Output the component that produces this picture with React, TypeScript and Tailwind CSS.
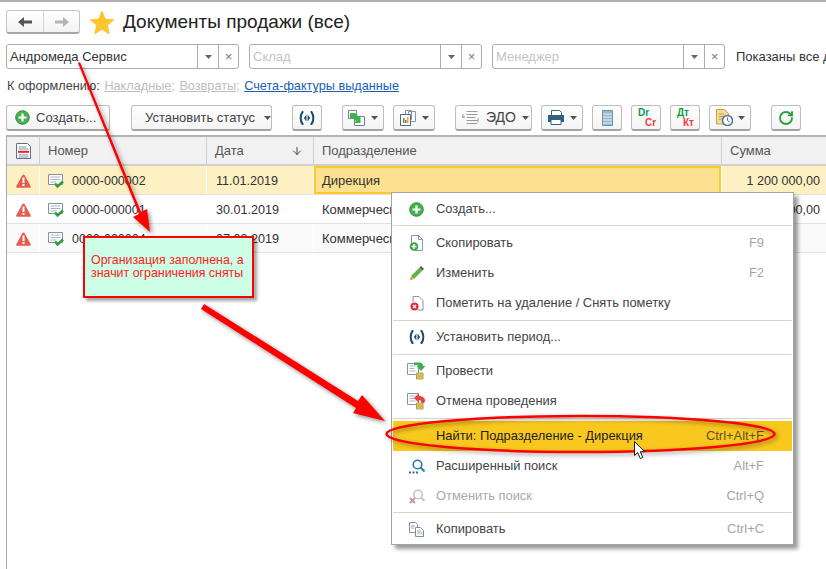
import { ArrowDown, RotateCw } from 'lucide-react';
import type { ReactNode } from 'react';

const Caret = ({ className = 'text-[#555]' }: { className?: string }) => (
  <svg width="7" height="4" viewBox="0 0 7 4" className={className}>
    <path d="M0 0h7L3.5 4z" fill="currentColor" />
  </svg>
);

const PlusCircle = ({ size = 15 }: { size?: number }) => (
  <svg width={size} height={size} viewBox="0 0 15 15">
    <circle cx="7.5" cy="7.5" r="6.8" fill="#47b04f" stroke="#2f8f3c" />
    <path d="M7.5 3.5v8M3.5 7.5h8" stroke="#fff" strokeWidth="2.2" />
  </svg>
);

const Period = () => (
  <svg width="16" height="14" viewBox="0 0 16 14" fill="none">
    <path d="M3.5 1C1.2 4.500 1.200 9.500 3.500 13M12.500 1c2.300 3.500 2.300 8.500 0 12" stroke="#1b4a73" strokeWidth="2.200" strokeLinecap="round" />
    <path d="M7.400 3.500v7L4.900 7zM8.600 3.500v7L11.100 7z" fill="#1b4a73" />
  </svg>
);

const HeaderDoc = () => (
  <svg width="15" height="16" viewBox="0 0 15 16">
    <path d="M.5.5h11l3 3v12H.5z" fill="#fff" stroke="#5d7488" />
    <path d="M2.5 4h8M2.5 6h10M2.5 12h10M2.5 14h10" stroke="#7f93a5" />
    <path d="M2 8.800h11" stroke="#ee1c25" strokeWidth="2" />
  </svg>
);

const Warning = () => (
  <svg width="15" height="14" viewBox="0 0 15 14">
    <path d="M7.5.5c.5 0 .9.3 1.200.8l5.900 10.600c.5 1 0 1.800-1 1.800H1.400c-1 0-1.500-.8-1-1.800L6.300 1.300c.3-.5.7-.8 1.200-.8z" fill="#e35d52" />
    <path d="M7.500 3.500v5.500" stroke="#fff" strokeWidth="2" />
    <path d="M7.500 10v2" stroke="#fff" strokeWidth="2" />
  </svg>
);

const DocCheck = () => (
  <svg width="17" height="16" viewBox="0 0 17 16">
    <path d="M.5 1.500h14v10H.5z" fill="#fff" stroke="#7f93a5" />
    <path d="M2.500 4h10M2.500 6.500h10M2.500 9h6" stroke="#a9b6c2" />
    <path d="M7 10.500l2.500 3 5.500-5" fill="none" stroke="#2fa03c" strokeWidth="2.600" />
  </svg>
);

const Coins = () => (
  <g>
    <path d="M9.500 11h6.500v6H9.500z" fill="#f0d670" stroke="#b79e4c" />
    <path d="M9.500 13h6.500M9.500 15h6.500" stroke="#b79e4c" />
  </g>
);

const PostDoc = () => (
  <svg width="19" height="18" viewBox="0 0 19 18">
    <path d="M.5 1.500h11v11H.5z" fill="#fff" stroke="#8496a8" />
    <path d="M2.500 4h6M2.500 6.500h5M2.500 9h6" stroke="#a9b6c2" />
    <path d="M7 .5h6c2 0 3 1.500 3 3.500h2.500l-4.500 5-4.500-5H12c0-.8-.5-1-1-1H7z" fill="#35b24c" />
    <Coins />
  </svg>
);

const UnpostDoc = () => (
  <svg width="19" height="18" viewBox="0 0 19 18">
    <path d="M.5 1.500h11v11H.5z" fill="#fff" stroke="#8496a8" />
    <path d="M2.500 4h6M2.500 6.500h5M2.500 9h6" stroke="#a9b6c2" />
    <path d="M7 6l5-5v3c3 0 6 1.500 6 4.500 0 1.200-.5 2-1 2.500h-3c.5-1 .2-3-2-3v3z" fill="#e3423f" />
    <Coins />
  </svg>
);

const ToolButton = ({ className, children }: { className: string; children: ReactNode }) => (
  <button className={`h-[26px] flex items-center rounded-[3px] border border-[#bdbdbd] border-b-[2px] border-b-[#a3a3a3] bg-gradient-to-b from-white to-[#f4f4f4] text-[13px] text-[#444] whitespace-nowrap shrink-0 ${className}`}>
    {children}
  </button>
);

const Filter = ({ text, placeholder }: { text?: string; placeholder?: string }) => (
  <div className="w-[233px] h-[25px] shrink-0 flex items-center rounded-[3px] border border-[#acacac] bg-white">
    <div className={`flex-1 pl-[3px] text-[13px] ${text ? 'text-[#333]' : 'text-[#c4c4c4]'}`}>{text ?? placeholder}</div>
    <div className="w-[21px] h-full border-l border-[#acacac] flex items-center justify-center"><Caret className="text-[#666]" /></div>
    <div className="w-[20px] h-full border-l border-[#acacac] flex items-center justify-center text-[13px] leading-none text-[#777]">×</div>
  </div>
);

type Row = { num: string; date: string; dept: string; sum: string; bg: string };

const rows: Row[] = [
  { num: '0000-000002', date: '11.01.2019', dept: 'Дирекция', sum: '1 200 000,00', bg: 'bg-[#fdf0c2]' },
  { num: '0000-000001', date: '30.01.2019', dept: 'Коммерческий отдел', sum: '1 500 000,00', bg: 'bg-white' },
  { num: '0000-000004', date: '07.03.2019', dept: 'Коммерческий отдел', sum: '', bg: 'bg-[#fafafa]' },
];

const cols = 'grid grid-cols-[32px_1px_166px_1px_106px_1px_407px_1px_1fr]';

type Item = { label: string; shortcut?: string; icon?: ReactNode; muted?: boolean; active?: boolean };

const MenuRow = ({ label, shortcut, icon, muted, active }: Item) => (
  <div className={`h-[30px] flex items-center pr-[28px] text-[12.9px] ${active ? 'bg-[#f9c81e] text-[#222]' : muted ? 'text-[#a9a9a9]' : 'text-[#444]'}`}>
    <div className="w-[43px] flex justify-center pl-[4px] shrink-0">{icon}</div>
    <div className="flex-1">{label}</div>
    {shortcut && <div className={active ? 'text-[#5c5230]' : 'text-[#a5a5a5]'}>{shortcut}</div>}
  </div>
);

const Sep = () => <div className="h-px bg-[#d9d5c9]" />;

const ContextMenu = () => (
  <div className="absolute left-[391px] top-[192px] w-[403px] h-[353px] bg-white border border-[#a3a3a3] px-px shadow-[4px_4px_4px_rgba(0,0,0,0.4)]">
    <div className="h-[32px] flex items-center"><div className="w-full"><MenuRow label="Создать..." icon={<PlusCircle />} /></div></div>
    <Sep />
    <div className="py-[2px]">
      <MenuRow label="Скопировать" shortcut="F9" icon={
        <svg width="15" height="16" viewBox="0 0 15 16">
          <path d="M2.500 9V.5h7l4 4v11H6" fill="#fff" stroke="#8496a8" />
          <path d="M9.500.5v4h4" fill="none" stroke="#8496a8" />
          <circle cx="5" cy="11.500" r="4.300" fill="#3aa648" />
          <path d="M5 9v5M2.500 11.500h5" stroke="#fff" strokeWidth="1.500" />
        </svg>} />
      <MenuRow label="Изменить" shortcut="F2" icon={
        <svg width="15" height="15" viewBox="0 0 15 15">
          <path d="M10.500 1.500l3 3L5 13l-3-3z" fill="#5fb548" />
          <path d="M10.500 1.500L12 0l3 3-1.500 1.500z" fill="#555" />
          <path d="M2 10l3 3-4.500 1.500z" fill="#e39b45" />
        </svg>} />
      <MenuRow label="Пометить на удаление / Снять пометку" icon={
        <svg width="14" height="15" viewBox="0 0 14 15">
          <path d="M3 6V.5h6l4 4v9.500H8" fill="#fff" stroke="#8496a8" />
          <circle cx="4.500" cy="10.500" r="4" fill="#dc2f3a" />
          <path d="M3 9l3 3M6 9l-3 3" stroke="#fff" strokeWidth="1.200" />
        </svg>} />
    </div>
    <Sep />
    <div className="py-px"><MenuRow label="Установить период..." icon={<Period />} /></div>
    <div className="h-px mt-px bg-[#d9d5c9]" />
    <div className="pt-px pb-[2px]">
      <MenuRow label="Провести" icon={<PostDoc />} />
      <MenuRow label="Отмена проведения" icon={<UnpostDoc />} />
    </div>
    <Sep />
    <div className="pt-[2px]">
      <MenuRow label="Найти: Подразделение - Дирекция" shortcut="Ctrl+Alt+F" active />
      <MenuRow label="Расширенный поиск" shortcut="Alt+F" icon={
        <svg width="16" height="15" viewBox="0 0 16 15" fill="none">
          <circle cx="8.500" cy="5.500" r="4.300" stroke="#2f79ac" strokeWidth="1.600" />
          <path d="M11.500 8.500l4 4" stroke="#2f79ac" strokeWidth="2" />
          <path d="M0 13.500h2M3.500 13.500h2M7 13.500h2" stroke="#2f6d9c" strokeWidth="2" />
        </svg>} />
      <MenuRow label="Отменить поиск" shortcut="Ctrl+Q" muted icon={
        <svg width="16" height="15" viewBox="0 0 16 15" fill="none">
          <circle cx="9" cy="5.500" r="4.300" stroke="#bfc5ca" strokeWidth="1.600" />
          <path d="M12 8.500l3.500 3.500" stroke="#bfc5ca" strokeWidth="2" />
          <path d="M1 9l5 5M6 9l-5 5" stroke="#c09a9a" strokeWidth="1.800" />
        </svg>} />
    </div>
    <div className="h-px mt-px bg-[#d9d5c9]" />
    <div className="pt-px">
      <MenuRow label="Копировать" shortcut="Ctrl+C" icon={
        <svg width="15" height="15" viewBox="0 0 15 15">
          <path d="M.5.5h6l2 2v8H.5z" fill="#fff" stroke="#7f8f9f" />
          <path d="M6.500 5.500h5l3 3v6h-8z" fill="#fff" stroke="#7f8f9f" />
          <path d="M2 4h4M2 6h3M8 9h4M8 11h5" stroke="#9aa7b3" />
        </svg>} />
    </div>
  </div>
);

export default function App() {
  return (
    <div className="relative w-[826px] h-[569px] overflow-hidden bg-white font-['Liberation_Sans',sans-serif] text-[#333] flex flex-col">
      <div className="h-[2px] bg-[#b0b0b0] shrink-0" />
      {/* title */}
      <div className="flex items-center pl-[6px] pt-[8px] h-[32px] shrink-0">
        <div className="w-[74px] h-[24px] flex rounded-[3px] border border-[#c4c4c4] border-b-[2px] border-b-[#a8a8a8] bg-gradient-to-b from-white to-[#f3f3f3]">
          <div className="w-[37px] flex items-center justify-center border-r border-[#d4d4d4]">
            <svg width="14" height="10" viewBox="0 0 14 10"><path d="M0 5l6-5v3.500h8v3H6V10z" fill="#555" /></svg>
          </div>
          <div className="flex-1 flex items-center justify-center">
            <svg width="14" height="10" viewBox="0 0 14 10"><path d="M14 5L8 0v3.500H0v3h8V10z" fill="#b5b5b5" /></svg>
          </div>
        </div>
        <svg width="24" height="23" viewBox="0 0 24 23" className="ml-[10px]">
          <path d="M12 0l3.400 8 8.600.7-6.500 5.600L19.400 23 12 18.500 4.600 23l1.900-8.700L0 8.700 8.600 8z" fill="#fdc62c" stroke="#f0b41c" strokeWidth=".5" />
        </svg>
        <h1 className="ml-[9px] text-[19px] text-[#222] whitespace-nowrap">Документы продажи (все)</h1>
      </div>
      {/* filters */}
      <div className="flex items-center gap-[10px] pl-[6px] mt-[10px] h-[25px] shrink-0">
        <Filter text="Андромеда Сервис" />
        <Filter placeholder="Склад" />
        <Filter placeholder="Менеджер" />
        <span className="ml-[1px] text-[13px] text-[#333] whitespace-nowrap">Показаны все документы</span>
      </div>
      {/* links */}
      <div className="flex items-center pl-[7px] mt-[9px] h-[18px] text-[12.7px] whitespace-nowrap shrink-0">
        <span className="text-[#444]">К оформлению:&nbsp;</span>
        <span className="ml-px text-[#bdbdbd] underline">Накладные</span><span className="text-[#bdbdbd]">;&nbsp;</span>
        <span className="ml-px text-[#bdbdbd] underline">Возвраты</span><span className="text-[#bdbdbd]">;&nbsp;</span>
        <span className="ml-px text-[#1a5fb4] underline">Счета-фактуры выданные</span>
      </div>
      {/* toolbar */}
      <div className="flex items-center pl-[6px] mt-[9px] h-[26px] shrink-0">
        <ToolButton className="w-[104px] pl-[8px] gap-[6px]"><PlusCircle />Создать...</ToolButton>
        <ToolButton className="w-[141px] ml-[21px] pl-[13px] gap-[9px]">Установить статус<Caret /></ToolButton>
        <ToolButton className="w-[30px] ml-[20px] justify-center"><Period /></ToolButton>
        <ToolButton className="w-[42px] ml-[20px] justify-center gap-[6px]">
          <svg width="17" height="16" viewBox="0 0 17 16">
            <path d="M.5.5h8v8H.5z" fill="#fff" stroke="#6f8598" />
            <path d="M6.500 6.500h10v9h-10z" fill="#fff" stroke="#6f8598" />
            <path d="M2 3h5l4 4 1.500-1.500V13H6l2-2-3-3H2z" fill="#3fb24f" />
          </svg><Caret />
        </ToolButton>
        <ToolButton className="w-[42px] ml-[9px] justify-center gap-[6px]">
          <svg width="16" height="16" viewBox="0 0 16 16">
            <path d="M5.500.5h6v9h-6zM8.500 1.500h7v10h-7z" fill="#fff" stroke="#8496a8" />
            <path d="M.5 4.500h10v11H.5z" fill="#fff" stroke="#55697c" />
            <path d="M3 8h1.500v5H3z" fill="#3aa648" /><path d="M5 10h1.500v3H5z" fill="#e0453c" /><path d="M7 7h1.500v6H7z" fill="#e8a33a" />
          </svg><Caret />
        </ToolButton>
        <ToolButton className="w-[77px] ml-[20px] pl-[6px] gap-[6px]">
          <svg width="18" height="14" viewBox="0 0 18 14" fill="none" stroke="#9a9a9a">
            <path d="M4.500 .5h11M4.500 3.500h11M4.500 6.500h9M4.500 9.500h11M4.500 12.500h11" />
            <path d="M1 3v4M0 6h3" /><path d="M16 7v4" />
          </svg><span className="text-[14px]">ЭДО</span><Caret />
        </ToolButton>
        <ToolButton className="w-[42px] ml-[9px] justify-center gap-[6px]">
          <svg width="16" height="15" viewBox="0 0 16 15">
            <path d="M3.500.5h8l2 2v3h-10z" fill="#fff" stroke="#33607f" />
            <path d="M0 5h16v7H0z" fill="#33607f" />
            <path d="M3 9.500h10v5H3z" fill="#fff" stroke="#33607f" />
          </svg><Caret />
        </ToolButton>
        <ToolButton className="w-[30px] ml-[9px] justify-center">
          <svg width="11" height="16" viewBox="0 0 11 16">
            <path d="M.5.500h10v15H.5z" fill="#9ab8cf" stroke="#6f92ac" />
            <path d="M1 4h9M1 7h9M1 10h9M1 13h9" stroke="#e7eff5" />
          </svg>
        </ToolButton>
        <ToolButton className="w-[30px] ml-[9px] relative">
          <span className="absolute left-[6px] top-[2px] text-[10px] font-bold leading-[10px] text-[#0f9a4a]">Dr</span>
          <span className="absolute left-[13px] top-[12px] text-[10px] font-bold leading-[10px] text-[#ee3b3b]">Cr</span>
        </ToolButton>
        <ToolButton className="w-[30px] ml-[9px] relative">
          <span className="absolute left-[6px] top-[2px] text-[10px] font-bold leading-[10px] text-[#0f9a4a]">Дт</span>
          <span className="absolute left-[12px] top-[12px] text-[10px] font-bold leading-[10px] text-[#ee3b3b]">Кт</span>
        </ToolButton>
        <ToolButton className="w-[42px] ml-[9px] justify-center gap-[5px]">
          <svg width="17" height="17" viewBox="0 0 17 17">
            <path d="M.5.500h8l4 4V15H.5z" fill="#f7dc8f" stroke="#c9a24f" />
            <path d="M3 5h5M3 7.500h5M3 10h4" stroke="#b89a55" />
            <circle cx="11.500" cy="11.500" r="5" fill="#fff" stroke="#3b78a8" strokeWidth="1.500" />
            <path d="M11.500 8.500v3l2 1.500" stroke="#d6453c" fill="none" />
          </svg><Caret />
        </ToolButton>
        <ToolButton className="w-[30px] ml-[20px] justify-center"><RotateCw size={16} strokeWidth={2.8} className="text-[#2f9e3e]" /></ToolButton>
      </div>
      {/* table */}
      <div className="ml-[6px] mt-[4px] flex-1 border-l border-l-[#a8a8a8] border-t-2 border-t-[#b4b4b4] text-[13px]">
        <div className={`${cols} h-[29px] bg-[#f1f1f1] border-b-2 border-b-[#d0d0d0] text-[#555]`}>
          <div className="flex items-center pl-[9px]"><HeaderDoc /></div>
          <div className="bg-[#cfcfcf]" />
          <div className="flex items-center pl-[8px]">Номер</div>
          <div className="bg-[#cfcfcf]" />
          <div className="flex items-center justify-between pl-[8px] pr-[10px]">Дата<ArrowDown size={12} strokeWidth={1.8} className="text-[#333]" /></div>
          <div className="bg-[#cfcfcf]" />
          <div className="flex items-center pl-[8px]">Подразделение</div>
          <div className="bg-[#cfcfcf]" />
          <div className="flex items-center pl-[8px]">Сумма</div>
        </div>
        {rows.map((r, i) => (
          <div key={r.num} className={`${cols} h-[29px] ${r.bg} border-b border-b-[#e2e2e2] text-[#333]`}>
            <div className="flex items-center pl-[9px] pt-[2px]"><Warning /></div>
            <div className="bg-white" />
            <div className="flex items-center pl-[8px] pt-[2px] gap-[7px] text-[12.5px]"><DocCheck />{r.num}</div>
            <div className="bg-white" />
            <div className="flex items-center pl-[9px] pt-[2px] text-[12.6px]">{r.date}</div>
            <div className="bg-white" />
            <div className={`flex items-center whitespace-nowrap pt-[2px] ${i === 0 ? 'pl-[6px] bg-[#fde190] border-2 border-[#fdca2e]' : 'pl-[8px]'}`}>{r.dept}</div>
            <div className="bg-white" />
            <div className="flex items-center justify-end pr-[6px] pt-[2px] text-[12.6px] whitespace-nowrap">{r.sum}</div>
          </div>
        ))}
      </div>
      <ContextMenu />
      <div className="absolute left-[83px] top-[236px] w-[171px] h-[62px] border-[2px] border-[#ff0000] bg-[#ccffe6] flex items-center pl-[6px] pr-[2px] text-[12.4px] leading-[13px] text-[#ff2020] shadow-[3px_3px_3px_rgba(0,0,0,0.35)]">
        Организация заполнена, а значит ограничения сняты
      </div>
      {/* callout arrows */}
      <svg width="826" height="569" className="absolute inset-0 pointer-events-none drop-shadow-[2px_2px_2px_rgba(0,0,0,0.45)]">
        <path d="M78 63l2-1 61 150 6-3 3 23-17-15 6-3z" fill="#ff0000" />
        <path d="M201 309l3-5 154 97 4-6 23 26-32-8 3-5z" fill="#ff0000" />
      </svg>
      <svg width="826" height="569" className="absolute inset-0 pointer-events-none drop-shadow-[2px_2px_2px_rgba(0,0,0,0.4)]">
        <ellipse cx="580.500" cy="434" rx="194" ry="18" fill="none" stroke="#ff0000" strokeWidth="2.500" />
      </svg>
      {/* mouse pointer */}
      <svg width="12" height="19" viewBox="0 0 12 19" className="absolute left-[634px] top-[441px]">
        <path d="M.5.5v14l3.300-3 2.400 6 2.600-1-2.500-5.800h4.500z" fill="#fff" stroke="#222" />
      </svg>
    </div>
  );
}
